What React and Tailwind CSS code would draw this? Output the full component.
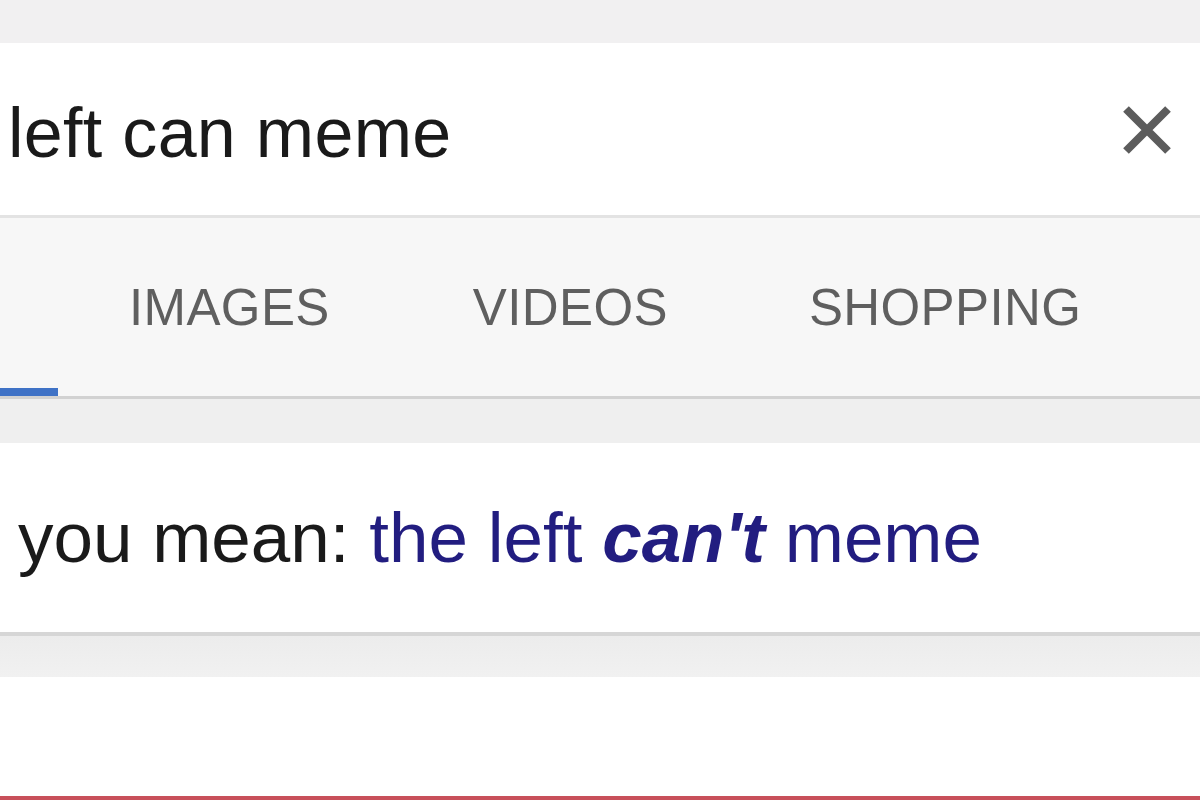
export default function App() {
  const font = { fontFamily: '"Liberation Sans", Arial, sans-serif' };
  return (
    <div className="w-[1200px] h-[800px] bg-white flex flex-col overflow-hidden" style={font}>
      <div className="h-[43px] bg-[#f1f0f1] shrink-0" />
      <div className="h-[172px] bg-white shrink-0 flex items-start justify-between">
        <div className="pt-[55px] pl-[8px] text-[70px] leading-[70px] text-[#1a1a1a] whitespace-nowrap tracking-[0.3px]">
          left can meme
        </div>
        <svg className="mt-[62px] mr-[28px]" width="50" height="50" viewBox="0 0 50 50">
          <path d="M4 4 L46 46 M46 4 L4 46" stroke="#5c5c5c" strokeWidth="8" strokeLinecap="butt" />
        </svg>
      </div>
      <div className="h-[3px] bg-[#e3e3e3] shrink-0" />
      <div className="h-[178px] bg-[#f7f7f7] shrink-0 flex flex-col">
        <div className="pt-[65px] flex text-[51px] leading-[50px] text-[#5f5f5f] whitespace-nowrap tracking-[0.4px]">
          <span className="ml-[129px]">IMAGES</span>
          <span className="ml-[143px]">VIDEOS</span>
          <span className="ml-[141px]">SHOPPING</span>
        </div>
        <div className="mt-auto h-[8px] w-[58px] bg-[#3f72c6]" />
      </div>
      <div className="h-[3px] bg-[#d2d2d2] shrink-0" />
      <div className="h-[44px] bg-[#efefef] shrink-0" />
      <div className="h-[189px] bg-white shrink-0">
        <div className="pt-[59px] pl-[18px] text-[71px] leading-[71px] text-[#1a1a1a] whitespace-nowrap">
          you mean: <span className="text-[#221d80]">the left <b className="italic font-bold">can't</b> meme</span>
        </div>
      </div>
      <div className="h-[4px] bg-[#d6d6d6] shrink-0" />
      <div className="h-[41px] bg-gradient-to-b from-[#ececec] to-[#f1f1f1] shrink-0" />
      <div className="flex-1 bg-white" />
      <div className="h-[4px] bg-[#c8505a] shrink-0" />
    </div>
  );
}
